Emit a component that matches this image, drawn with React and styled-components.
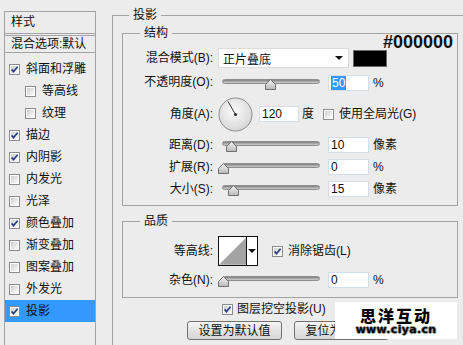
import React from 'react';
import styled, { createGlobalStyle } from 'styled-components';

const Global = createGlobalStyle`
  html, body { margin: 0; padding: 0; background: #ececec; overflow: hidden; }
  body {
    font-family: "Liberation Sans", "Noto Sans CJK SC", sans-serif;
    font-size: 12px;
    color: #111;
  }
`;

const Page = styled.div`
  width: 463px;
  height: 345px;
  overflow: hidden;
  position: relative;
  display: flex;
  align-items: flex-start;
  background: #ececec;
`;

/* ---------- left style list ---------- */
const Side = styled.div`
  margin: 11px 0 0 4px;
  width: 92px;
  height: 340px;
  flex-shrink: 0;
  box-sizing: border-box;
  border: 1px solid #a3a3a3;
  border-bottom: none;
  display: flex;
  flex-direction: column;
`;

const SideHead = styled.div`
  height: 24px;
  box-sizing: border-box;
  padding: 2px 0 0 6px;
  line-height: 16px;
  border-bottom: 3px double #a3a3a3;
`;

const SideBlend = styled.div`
  height: 17px;
  box-sizing: border-box;
  padding: 0 0 0 6px;
  line-height: 16px;
  border-bottom: 1px solid #a3a3a3;
  white-space: nowrap;
`;

const List = styled.div`
  padding-top: 5px;
  display: flex;
  flex-direction: column;
`;

const Item = styled.div`
  height: 22px;
  display: flex;
  align-items: center;
  gap: 6px;
  padding-left: ${p => (p.$sub ? 20 : 4)}px;
  background: ${p => (p.$active ? '#3399ff' : 'transparent')};
  line-height: 16px;
  white-space: nowrap;
`;

/* ---------- right panel ---------- */
const Outer = styled.fieldset`
  margin: 7px 0 0 16px;
  padding: 0;
  width: 420px;
  height: 420px;
  flex-shrink: 0;
  min-width: 0;
  box-sizing: border-box;
  border: 1px solid #a3a3a3;
  border-right: none;
  border-bottom: none;
`;

const Legend = styled.legend`
  margin-left: ${p => p.$ml}px;
  padding: 0 4px;
  line-height: 16px;
  font-size: 12px;
`;

const Column = styled.div`
  padding-left: 9px;
  display: flex;
  flex-direction: column;
`;

const Group = styled.fieldset`
  position: relative;
  margin: ${p => p.$mt}px 0 0 0;
  padding: 0 0 ${p => p.$pb}px 0;
  width: 336px;
  min-width: 0;
  box-sizing: border-box;
  border: 1px solid #a3a3a3;
`;

const Row = styled.div`
  display: flex;
  align-items: center;
  height: ${p => p.$h}px;
  margin-top: ${p => p.$mt || 0}px;
  padding-left: ${p => p.$pl || 0}px;
  white-space: nowrap;
`;

const Label = styled.span`
  width: 90px;
  flex-shrink: 0;
  text-align: right;
  line-height: 16px;
  margin-top: ${p => p.$up ? -3 : 0}px;
`;

const Text = styled.span`
  margin-left: ${p => p.$ml || 0}px;
  line-height: 16px;
`;

const Select = styled.div`
  margin-left: 5px;
  width: 131px;
  height: 20px;
  box-sizing: border-box;
  background: #fff;
  border: 1px solid #dcdcdc;
  display: flex;
  align-items: center;
  justify-content: space-between;
  padding: 0 5px 0 4px;
`;

const Arrow = styled.span`
  width: 0;
  height: 0;
  border-left: 4px solid transparent;
  border-right: 4px solid transparent;
  border-top: 4px solid #111;
`;

const Swatch = styled.div`
  margin-left: 4px;
  width: 34px;
  height: 17px;
  box-sizing: border-box;
  background: #000;
  border: 1px solid #6a6a6a;
`;

const HexTag = styled.span`
  position: absolute;
  right: 4px;
  top: -8px;
  font-family: "Liberation Sans", sans-serif;
  font-weight: bold;
  font-size: 18px;
  line-height: 18px;
  color: #111;
`;

const SliderBox = styled.div`
  position: relative;
  margin-left: 9px;
  width: 98px;
  height: 11px;
  flex-shrink: 0;
  margin-top: 2px;
`;

const Track = styled.div`
  height: 5px;
  box-sizing: border-box;
  border-radius: 3px;
  background: linear-gradient(#7f7f7f, #b8b8b8 70%, #cfcfcf);
  border: 1px solid #8e8e8e;
`;

const Thumb = styled.svg`
  position: absolute;
  top: 0;
`;

const Input = styled.div`
  margin-left: ${p => p.$ml}px;
  width: ${p => p.$w || 41}px;
  height: 16px;
  box-sizing: border-box;
  background: #fff;
  border: 1px solid #d5dde5;
  padding-left: 2px;
  line-height: 14px;
  font-size: 12px;
  display: flex;
  align-items: center;
  flex-shrink: 0;
`;

const Sel = styled.span`
  background: #3399ff;
  color: #fff;
  line-height: 14px;
  padding: 0 1px;
`;

const ContourBox = styled.div`
  margin-left: 5px;
  width: 40px;
  height: 30px;
  box-sizing: border-box;
  border: 1px solid #111;
  background: #fff;
  display: flex;
`;

const ContourArrow = styled.div`
  width: 10px;
  border-left: 1px solid #111;
  display: flex;
  align-items: center;
  justify-content: center;
`;

const Button = styled.div`
  width: 95px;
  height: 19px;
  box-sizing: border-box;
  margin-left: ${p => p.$ml}px;
  border: 1px solid #707070;
  border-radius: 3px;
  background: linear-gradient(#f6f6f6, #e4e4e4 50%, #d6d6d6);
  display: flex;
  align-items: center;
  justify-content: center;
  line-height: 16px;
  flex-shrink: 0;
`;

const Watermark = styled.div`
  position: absolute;
  left: 335px;
  top: 302px;
  width: 122px;
  height: 37px;
  background: #fff;
  display: flex;
  flex-direction: column;
  align-items: center;
  justify-content: center;
`;

const WmTitle = styled.div`
  font-family: "Noto Sans CJK SC", sans-serif;
  font-weight: 900;
  font-size: 16px;
  line-height: 17px;
  letter-spacing: 2px;
  color: #000;
`;

const WmUrl = styled.div`
  font-family: "DejaVu Sans", sans-serif;
  font-weight: bold;
  font-size: 11px;
  line-height: 11px;
  color: #000;
  text-shadow: 1px 0 0 #999, -1px 0 0 #999, 0 1px 0 #999, 0 -1px 0 #999;
  letter-spacing: 0.3px;
`;

/* ---------- drawings ---------- */
function Check({ on }) {
  return (
    <svg width="11" height="11" viewBox="0 0 11 11" style={{ flexShrink: 0 }}>
      <defs>
        <linearGradient id="cbg" x1="0" y1="0" x2="1" y2="1">
          <stop offset="0" stopColor="#cfcfcf" />
          <stop offset="1" stopColor="#fbfbfb" />
        </linearGradient>
      </defs>
      <rect x="0.5" y="0.5" width="10" height="10" fill="#fff" stroke="#8c8c8c" />
      <rect x="2" y="2" width="7" height="7" fill="url(#cbg)" />
      {on && (
        <path d="M2.6 5.4 L4.5 7.6 L8.6 2.8" fill="none" stroke="#2b3f82" strokeWidth="1.7" />
      )}
    </svg>
  );
}

function Slider({ pos }) {
  return (
    <SliderBox>
      <Track />
      <Thumb width="11" height="11" viewBox="0 0 11 11" style={{ left: pos - 5 }}>
        <defs>
          <linearGradient id="thg" x1="0" y1="0" x2="0" y2="1">
            <stop offset="0" stopColor="#f4f4f4" />
            <stop offset="1" stopColor="#b9b9b9" />
          </linearGradient>
        </defs>
        <path d="M5.5 0.5 L10.5 5.5 L10.5 10.5 L0.5 10.5 L0.5 5.5 Z" fill="url(#thg)" stroke="#6e6e6e" />
      </Thumb>
    </SliderBox>
  );
}

function Dial() {
  return (
    <svg width="35" height="35" viewBox="0 0 35 35" style={{ marginLeft: 5, flexShrink: 0 }}>
      <defs>
        <radialGradient id="dg" cx="0.45" cy="0.4" r="0.65">
          <stop offset="0" stopColor="#fbfbfb" />
          <stop offset="1" stopColor="#d4d4d4" />
        </radialGradient>
      </defs>
      <circle cx="17.5" cy="17.5" r="16.5" fill="url(#dg)" stroke="#8a8a8a" />
      <line x1="17.5" y1="17.5" x2="10" y2="4.5" stroke="#333" strokeWidth="1" />
      <circle cx="17.5" cy="17.5" r="1.6" fill="#333" />
    </svg>
  );
}

const styles = [
  { t: '斜面和浮雕', on: true },
  { t: '等高线', sub: true },
  { t: '纹理', sub: true },
  { t: '描边', on: true },
  { t: '内阴影', on: true },
  { t: '内发光' },
  { t: '光泽' },
  { t: '颜色叠加', on: true },
  { t: '渐变叠加' },
  { t: '图案叠加' },
  { t: '外发光' },
  { t: '投影', on: true, active: true },
];

export default function App() {
  return (
    <Page>
      <Global />
      <Side>
        <SideHead>样式</SideHead>
        <SideBlend>混合选项:默认</SideBlend>
        <List>
          {styles.map(s => (
            <Item key={s.t} $sub={s.sub} $active={s.active}>
              <Check on={s.on} />
              <span>{s.t}</span>
            </Item>
          ))}
        </List>
      </Side>

      <Outer>
        <Legend $ml={16}>投影</Legend>
        <Column>
          <Group $mt={2} $pb={5}>
            <Legend $ml={17}>结构</Legend>
            <HexTag>#000000</HexTag>
            <Row $h={20} $mt={7}>
              <Label>混合模式(B):</Label>
              <Select>
                <span>正片叠底</span>
                <Arrow />
              </Select>
              <Swatch />
            </Row>
            <Row $h={22} $mt={4}>
              <Label $up>不透明度(O):</Label>
              <Slider pos={48} />
              <Input $ml={8}><Sel>50</Sel></Input>
              <Text $ml={4}>%</Text>
            </Row>
            <Row $h={36} $mt={2}>
              <Label>角度(A):</Label>
              <Dial />
              <Input $ml={6} $w={40}>120</Input>
              <Text $ml={3}>度</Text>
              <Text $ml={9} style={{ display: 'flex' }}><Check /></Text>
              <Text $ml={5}>使用全局光(G)</Text>
            </Row>
            <Row $h={22} $mt={2}>
              <Label>距离(D):</Label>
              <Slider pos={9} />
              <Input $ml={8}>10</Input>
              <Text $ml={4}>像素</Text>
            </Row>
            <Row $h={22}>
              <Label>扩展(R):</Label>
              <Slider pos={1} />
              <Input $ml={8}>0</Input>
              <Text $ml={4}>%</Text>
            </Row>
            <Row $h={22}>
              <Label>大小(S):</Label>
              <Slider pos={11} />
              <Input $ml={8}>15</Input>
              <Text $ml={4}>像素</Text>
            </Row>
          </Group>

          <Group $mt={7} $pb={6}>
            <Legend $ml={17}>品质</Legend>
            <Row $h={30} $mt={7}>
              <Label>等高线:</Label>
              <ContourBox>
                <svg width="28" height="28" viewBox="0 0 28 28">
                  <path d="M0 28 L28 0 L28 28 Z" fill="#a3a3a3" />
                </svg>
                <ContourArrow>
                  <Arrow />
                </ContourArrow>
              </ContourBox>
              <Text $ml={14} style={{ display: 'flex' }}><Check on /></Text>
              <Text $ml={5}>消除锯齿(L)</Text>
            </Row>
            <Row $h={22} $mt={3}>
              <Label>杂色(N):</Label>
              <Slider pos={1} />
              <Input $ml={8}>0</Input>
              <Text $ml={4}>%</Text>
            </Row>
          </Group>

          <Row $h={18} $mt={2} $pl={100}>
            <Check on />
            <Text $ml={4}>图层挖空投影(U)</Text>
          </Row>
          <Row $h={19} $mt={3} $pl={65}>
            <Button $ml={0}>设置为默认值</Button>
            <Button $ml={12}>复位为默认值</Button>
          </Row>
        </Column>
      </Outer>

      <Watermark>
        <WmTitle>思洋互动</WmTitle>
        <WmUrl>www.ciya.cn</WmUrl>
      </Watermark>
    </Page>
  );
}
